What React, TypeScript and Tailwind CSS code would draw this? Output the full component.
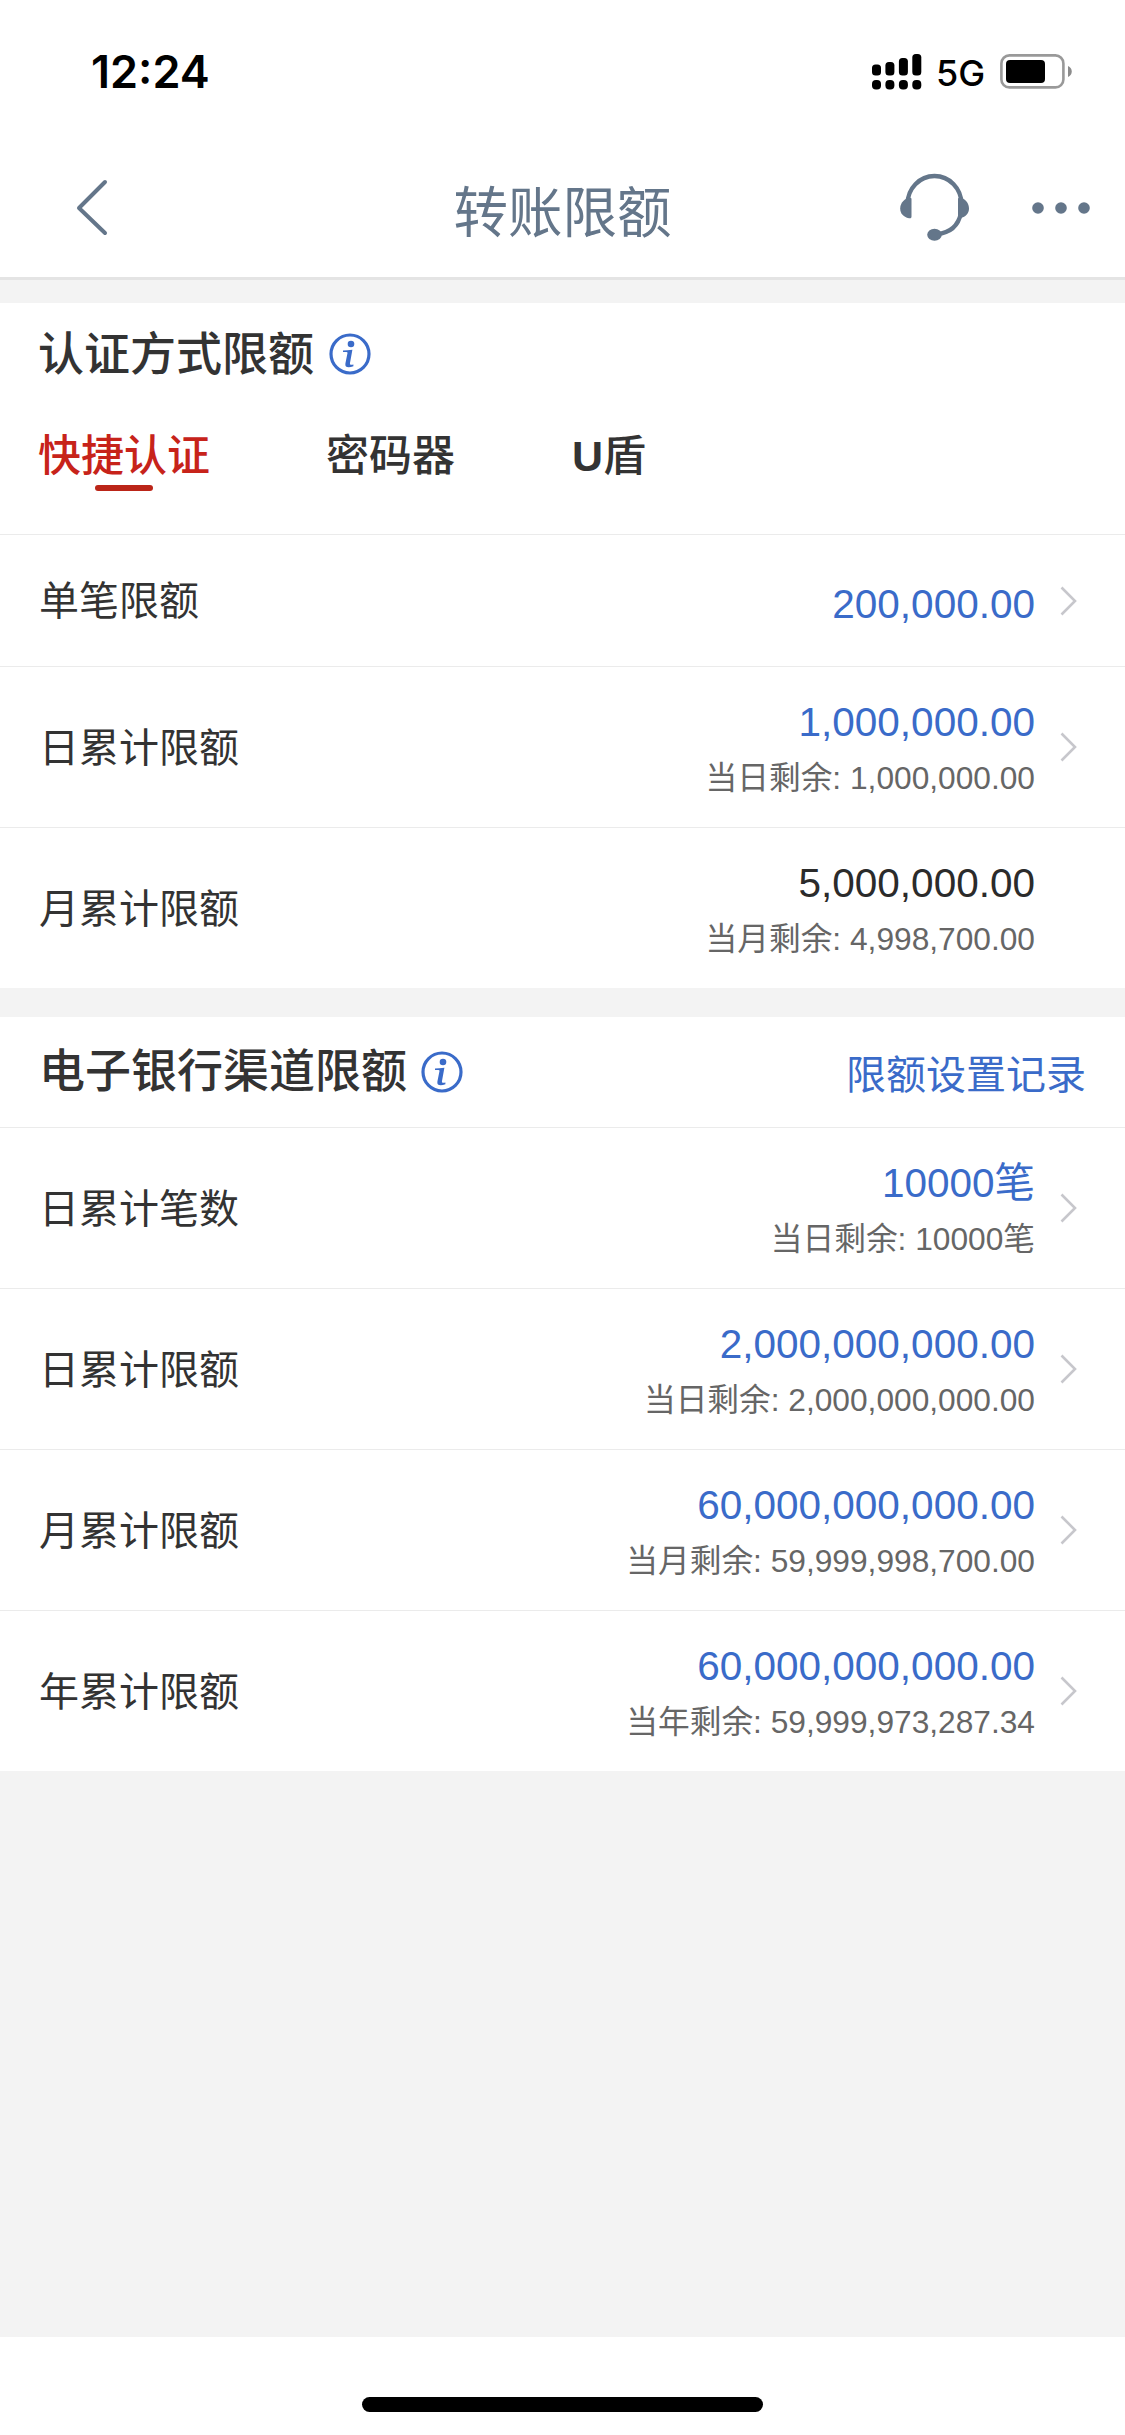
interface Limit {
  label: string;
  amount: string;
  remaining?: string;
  editable: boolean;
}

const authLimits: Limit[] = [
  { label: "单笔限额", amount: "200,000.00", editable: true },
  { label: "日累计限额", amount: "1,000,000.00", remaining: "当日剩余: 1,000,000.00", editable: true },
  { label: "月累计限额", amount: "5,000,000.00", remaining: "当月剩余: 4,998,700.00", editable: false },
];

const channelLimits: Limit[] = [
  { label: "日累计笔数", amount: "10000笔", remaining: "当日剩余: 10000笔", editable: true },
  { label: "日累计限额", amount: "2,000,000,000.00", remaining: "当日剩余: 2,000,000,000.00", editable: true },
  { label: "月累计限额", amount: "60,000,000,000.00", remaining: "当月剩余: 59,999,998,700.00", editable: true },
  { label: "年累计限额", amount: "60,000,000,000.00", remaining: "当年剩余: 59,999,973,287.34", editable: true },
];

const StatusBar = () => (
  <div className="flex h-[142px] justify-between pl-[91px] pr-[53px] pt-[45px] font-[Inter,sans-serif] text-black">
    <span className="text-[45px] font-semibold leading-[54px]">12:24</span>
    <div className="flex h-[54px] items-center">
      <svg width="50" height="36" viewBox="0 0 50 36" fill="currentColor">
        <rect x="0" y="10.5" width="9" height="11" rx="3.5" />
        <rect x="13.4" y="8" width="9" height="13.5" rx="3.5" />
        <rect x="26.9" y="4" width="9" height="17.5" rx="3.5" />
        <rect x="40.3" y="0" width="9" height="21.5" rx="3.5" />
        <rect x="0" y="26" width="9" height="9.5" rx="4" />
        <rect x="13.4" y="26" width="9" height="9.5" rx="4" />
        <rect x="26.9" y="26" width="9" height="9.5" rx="4" />
        <rect x="40.3" y="26" width="9" height="9.5" rx="4" />
      </svg>
      <span className="ml-[14px] mt-[1px] w-[64px] text-[36px] font-medium leading-[44px]">5G</span>
      <svg width="72" height="36" viewBox="0 0 72 36" fill="none">
        <rect x="1.4" y="1.4" width="62" height="32" rx="8" stroke="#999" strokeWidth="2.6" />
        <rect x="6" y="6" width="39" height="23" rx="4" fill="#000" />
        <path d="M68 12v11c5-2 5-9 0-11z" fill="#8c8c8c" />
      </svg>
    </div>
  </div>
);

const Header = () => (
  <header className="flex h-[138px] items-center justify-between border-b-[3px] border-[#e4e4e4] text-[#64768a]">
    <div className="mb-[6px] w-[450px] pl-[74px]">
      <svg width="34" height="60" viewBox="0 0 34 60" fill="none" stroke="currentColor" strokeWidth="4" strokeLinecap="round" strokeLinejoin="round">
        <path d="M31 5L5 31 31 56" />
      </svg>
    </div>
    <h1 className="mt-[8px] text-[54.5px] leading-[64px]">转账限额</h1>
    <div className="mb-[5px] flex w-[450px] items-center justify-end pr-[34px]">
      <svg width="72" height="72" viewBox="0 0 72 72" fill="none">
        <path d="M8.5 33A27 28 0 0 1 62.5 33M62 42C59 56 50 62 38 63" stroke="currentColor" strokeWidth="4.3" />
        <path d="M12.5 28v17.500c0 1.500-1 2-2.500 1.800C4 46 1.200 42 1.200 37.500S4 29 9 27c2-.6 3.500-.5 3.500 1z" fill="currentColor" />
        <path d="M59 28v17.500c0 1.500 1 2 2.500 1.500C67 46 70 42 70 37.500S67.500 29 62.500 27c-2-.6-3.500-.5-3.500 1z" fill="currentColor" />
        <ellipse cx="35.500" cy="63.800" rx="7.300" ry="6" fill="currentColor" />
      </svg>
      <svg className="ml-[60px] mt-[2px]" width="60" height="14" viewBox="0 0 60 14" fill="currentColor">
        <circle cx="7" cy="7" r="5.800" />
        <circle cx="30" cy="7" r="5.800" />
        <circle cx="53" cy="7" r="5.800" />
      </svg>
    </div>
  </header>
);

const InfoIcon = () => (
  <svg width="42" height="42" viewBox="0 0 42 42" fill="none">
    <circle cx="21" cy="21" r="19" stroke="#3a6bc9" strokeWidth="3.2" />
    <circle cx="22" cy="11" r="3.300" fill="#3a6bc9" />
    <path d="M14 17.600C17 17.600 20 17.200 23.400 16.800L21 30c-.4 2 .8 2 3.400 1.400v1.800c-4.800 2-8.800 1.400-8-2.700L18.500 20c.2-1-1-1.200-4.500-.9z" fill="#3a6bc9" />
  </svg>
);

const LimitRow = ({ label, amount, remaining, editable }: Limit) => (
  <div className={`flex items-center border-t border-[#ebebeb] pl-[39px] pr-[47px] ${remaining ? 'h-[161px]' : 'h-[132px]'}`}>
    <div className="flex-1 pt-px text-[40px] leading-[56px] text-[#333]">{label}</div>
    <div className="pt-[6px] text-right">
      <div className={`text-[40.5px] leading-[56px] ${editable ? 'text-[#3a6bc9]' : 'text-[#2b2b2b]'}`}>{amount}</div>
      {remaining && <div className="text-[31.7px] leading-[56px] text-[#666]">{remaining}</div>}
    </div>
    <svg className="ml-[25px]" width="18" height="30" viewBox="0 0 18 30" fill="none" stroke="#c7c7cc" strokeWidth="2.600">
      {editable && <path d="M1.500 1.500L15 15 1.500 28.500" />}
    </svg>
  </div>
);

const App = () => {
  return (
    <div className="flex h-[2435px] w-[1125px] flex-col bg-white font-['Liberation_Sans','Noto_Sans_CJK_SC',sans-serif]">
      <StatusBar />
      <Header />
      <main className="flex-1 bg-[#f3f3f3] pt-[23px]">
        <section className="bg-white">
          <div className="flex h-[102px] items-center gap-[15px] pl-[38px]">
            <h2 className="text-[46px] font-medium leading-[60px] text-[#333]">认证方式限额</h2>
            <InfoIcon />
          </div>
          <div className="flex h-[129px] pl-[38px] pt-[21px] text-[43px] font-medium leading-[60px] text-[#333]">
            <div className="flex flex-col items-center text-[#c7231a]">
              快捷认证
              <span className="-mt-px h-[6px] w-[58px] rounded-full bg-[#bb2518]" />
            </div>
            <div className="ml-[116px]">密码器</div>
            <div className="ml-[117px]"><span className="font-bold">U</span>盾</div>
          </div>
          {authLimits.map((limit) => (
            <LimitRow key={limit.label} {...limit} />
          ))}
        </section>

        <section className="mt-[29px] bg-white">
          <div className="flex h-[110px] items-center pl-[39px] pr-[39px]">
            <h2 className="mr-[14px] pb-[2px] text-[46px] font-medium leading-[60px] text-[#333]">电子银行渠道限额</h2>
            <InfoIcon />
            <a className="ml-auto pt-[5px] text-[40px] leading-[56px] text-[#3a6bc9]">限额设置记录</a>
          </div>
          {channelLimits.map((limit) => (
            <LimitRow key={limit.label} {...limit} />
          ))}
        </section>
      </main>
      <footer className="flex h-[98px] justify-center pt-[60px]">
        <div className="h-[15px] w-[401px] rounded-full bg-black" />
      </footer>
    </div>
  );
};

export default App;
